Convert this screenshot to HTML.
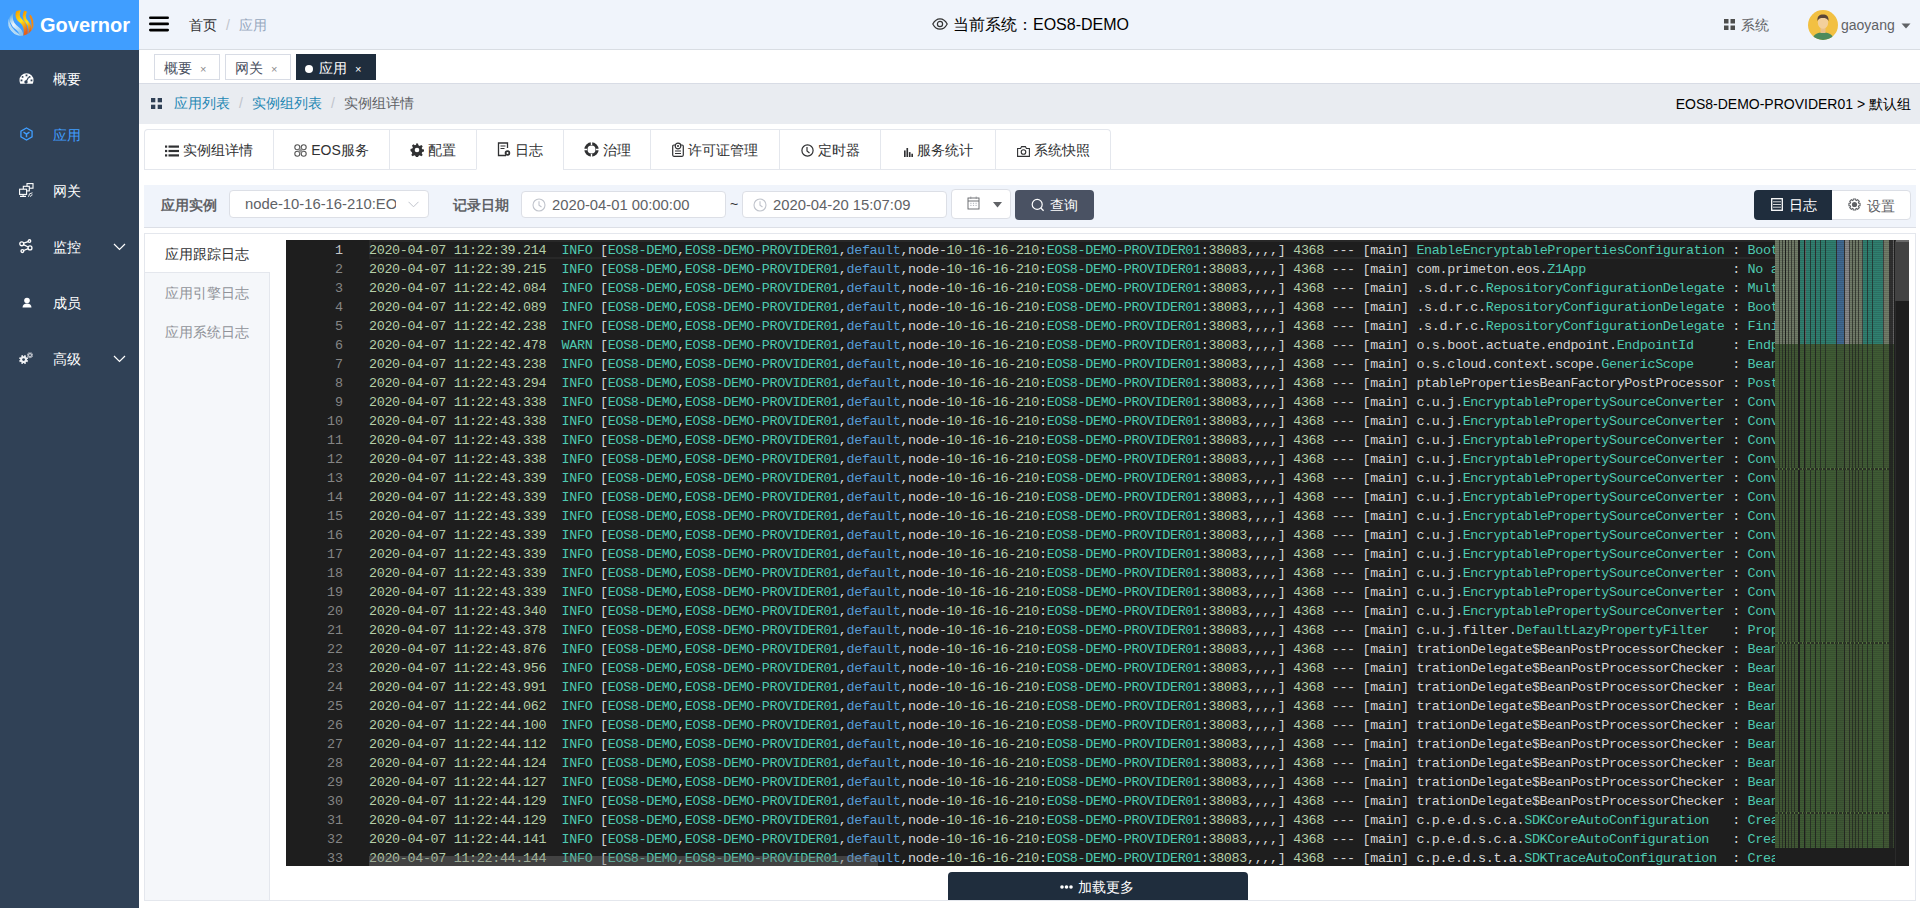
<!DOCTYPE html>
<html><head><meta charset="utf-8">
<style>
*{box-sizing:border-box;margin:0;padding:0}
html,body{width:1920px;height:908px;overflow:hidden;background:#fff;font-family:"Liberation Sans",sans-serif;font-size:14px;color:#303133}
.abs{position:absolute}
#side{left:0;top:0;width:139px;height:908px;background:#304156}
#logo{left:0;top:0;width:139px;height:50px;background:#409eff}
#logo .t{left:40px;top:12.5px;font-size:20px;font-weight:bold;color:#fff;line-height:24px}
.mi{left:0;width:139px;height:56px;color:#fff}
.mi .tx{position:absolute;left:53px;top:19px;line-height:18px;font-size:14px}
.mi svg{position:absolute;left:19px;top:21px}
.mi .arr{position:absolute;left:113px;top:24px}
#nav{left:139px;top:0;width:1781px;height:50px;background:#f0f4fb;border-bottom:1px solid #d9dde3}
#tags{left:139px;top:50px;width:1781px;height:34px;background:#fff;border-bottom:1px solid #d8dce5}
.tag{position:absolute;top:4px;height:26px;border:1px solid #d8dce5;background:#fff;color:#495060;font-size:14px;line-height:26px;padding-left:9px}
.tag .x{position:absolute;font-size:11px;color:#8c8c8c;line-height:24px}
#bc{left:139px;top:84px;width:1781px;height:40px;background:#e9ecf1}
#tabs{left:144px;top:129px;width:967px;height:41px;border:1px solid #e4e7ed;border-bottom:none;border-radius:4px 4px 0 0}
.tab{position:absolute;top:0;height:40px;border-left:1px solid #e4e7ed;border-bottom:1px solid #e4e7ed;line-height:40px;font-size:14px;color:#303133;text-align:center;white-space:nowrap}
.tab.first{border-left:none}
.tab.act{border-bottom-color:#fff}
.tab svg{vertical-align:-2px;margin-right:4px}
#tabline{left:1110px;top:169px;width:0px;height:1px;background:#e4e7ed}
#filter{left:144px;top:185px;width:1772px;height:43px;background:#f0f4fb;border-bottom:1px solid #dcdfe6}
.lbl{position:absolute;top:11px;font-weight:bold;font-size:14px;color:#606266;line-height:18px}
.inp{position:absolute;background:#fff;border:1px solid #dcdfe6;border-radius:4px;color:#606266;font-size:14px}
#panel{left:144px;top:233px;width:1772px;height:668px;border:1px solid #e4e7ed;background:#fff}
#ltabs{left:145px;top:234px;width:125px;height:666px;background:#f5f7fa;border-right:1px solid #e4e7ed}
.lt{position:absolute;left:0;width:124px;height:39px;line-height:41px;padding-left:20px;color:#909399;font-size:14px}
.lt.act{background:#fff;color:#303133;border-bottom:1px solid #e4e7ed;width:125px}
#ed{left:286px;top:240px;width:1623px;height:626px;background:#1e1e1e;overflow:hidden}
.ln{position:absolute;left:0;height:19px;margin-top:1px;width:1623px;line-height:19px;font-family:"Liberation Mono",monospace;font-size:13.4px;white-space:pre}
.ln i{font-style:normal}
.num{position:absolute;left:0;width:57px;text-align:right;color:#858585}
.num.act{color:#c6c6c6}
.txt{position:absolute;left:83px;letter-spacing:-0.335px}
#curline{left:369px;top:240px;width:1406px;height:19px;border:2px solid #282828;border-right:none}
#mm{left:1775px;top:240px;width:120px;height:608px}
#mmtop{left:1775px;top:240px;width:120px;height:104px}
#mmbot{left:1775px;top:344px;width:120px;height:504px}
#vs{left:1895px;top:240px;width:14px;height:626px;background:#1e1e1e;border-left:1px solid #2a2a2a}
#vsl{left:1895px;top:241px;width:14px;height:60px;background:#424242}
#hs{left:369px;top:856px;width:509px;height:10px;background:rgba(121,121,121,0.4)}
#more{left:948px;top:872px;width:300px;height:28px;background:#1f2d3d;border-radius:4px 4px 0 0;color:#fff;text-align:center;line-height:28px;font-size:14px}
</style></head><body>

<!-- Sidebar -->
<div id="side" class="abs"></div>
<div id="logo" class="abs">
  <svg class="abs" style="left:5px;top:7px" width="32" height="32" viewBox="0 0 32 32">
    <defs>
      <linearGradient id="ly" x1="0" y1="0" x2="0.3" y2="1"><stop offset="0" stop-color="#f59a00"/><stop offset="0.5" stop-color="#ffe418"/><stop offset="1" stop-color="#e5601a"/></linearGradient>
      <linearGradient id="lw" x1="0" y1="0" x2="0.3" y2="1"><stop offset="0" stop-color="#3a9ce0"/><stop offset="0.5" stop-color="#eef6fc"/><stop offset="1" stop-color="#8cc6ee"/></linearGradient>
      <filter id="lb"><feGaussianBlur stdDeviation="0.5"/></filter>
      <clipPath id="lc"><circle cx="16" cy="16" r="12.8"/></clipPath>
    </defs>
    <g filter="url(#lb)"><g clip-path="url(#lc)" fill="none" stroke-linecap="round">
      <path d="M2.5 12 C3 20 8 25 14 29" stroke="#b4daf4" stroke-width="3"/>
      <path d="M7 5 C4.5 12 7.5 18 12.5 21.5 C16 24 17 27 16 31" stroke="url(#lw)" stroke-width="3.6"/>
      <path d="M14.5 2 C11.5 7 12 11 16 14 C20 17 22 22 20 31" stroke="url(#ly)" stroke-width="4"/>
      <path d="M20.5 4.5 C18.5 8 19 12 22 15 C25 18 26 23 24 30" stroke="url(#ly)" stroke-width="3"/>
      <path d="M25.5 9 C27.5 13 28.5 18 27 25" stroke="#f08a18" stroke-width="2.2"/>
    </g></g>
  </svg>
  <div class="abs t">Governor</div>
</div>

<div class="abs mi" style="top:51px">
  <svg width="15" height="14" viewBox="0 0 15 14"><path d="M7.5 1.3A7 7 0 0 0 0.5 8.3c0 1.3.2 2.4.8 3.5h12.4c.6-1.1.8-2.2.8-3.5a7 7 0 0 0-7-7z" fill="#fff"/><rect x="6.6" y="2.5" width="1.8" height="1.8" fill="#304156"/><circle cx="3.6" cy="4.9" r="0.95" fill="#304156"/><circle cx="10.6" cy="4.9" r="0.95" fill="#304156"/><rect x="1.6" y="7.5" width="1.8" height="1.8" fill="#304156"/><rect x="11.6" y="7.5" width="1.8" height="1.8" fill="#304156"/><path d="M7.2 9.5 L9.6 5.3" stroke="#304156" stroke-width="1.2"/><circle cx="7" cy="10" r="1.7" fill="#304156"/></svg>
  <span class="tx">概要</span>
</div>
<div class="abs mi" style="top:107px;color:#409eff">
  <svg width="13" height="14" viewBox="0 0 14 15" style="left:19.5px;top:19.5px"><path d="M7 1 L13 4.4 V10.6 L7 14 L1 10.6 V4.4 Z" fill="none" stroke="#409eff" stroke-width="1.4"/><path d="M3.8 5.6 L7 7.6 L10.2 5.6 M7 7.6 V11" fill="none" stroke="#409eff" stroke-width="1.6"/></svg>
  <span class="tx">应用</span>
</div>
<div class="abs mi" style="top:163px">
  <svg width="15" height="14" viewBox="0 0 15 14" style="left:19px;top:20px"><rect x="8" y="0.6" width="6" height="4.6" fill="#304156" stroke="#fff" stroke-width="1.1"/><rect x="4.3" y="3.3" width="6" height="4.6" fill="#304156" stroke="#fff" stroke-width="1.1"/><rect x="0.6" y="6.2" width="7" height="5.2" fill="#304156" stroke="#fff" stroke-width="1.1"/><path d="M1 13.4h6M4.1 11.4v2" stroke="#fff" stroke-width="1.1"/><path d="M9.5 13.8a4 4 0 0 1 4-4M11.5 13.8a2 2 0 0 1 2-2" stroke="#fff" stroke-width="0.9" fill="none"/></svg>
  <span class="tx">网关</span>
</div>
<div class="abs mi" style="top:219px">
  <svg width="15" height="16" viewBox="0 0 15 16" style="top:19px"><g fill="none" stroke="#fff" stroke-width="1.3"><circle cx="2.75" cy="5.8" r="1.95"/><circle cx="10.45" cy="3.05" r="1.3"/><circle cx="11" cy="9.9" r="1.95"/><circle cx="3.4" cy="13.1" r="1.4"/><path d="M4.5 6.7 L9.2 9 M4.6 12.5 L9.2 10.7 M4.6 5.1 L9.1 3.6"/></g></svg>
  <span class="tx">监控</span>
  <svg class="arr" width="13" height="8" viewBox="0 0 13 8"><path d="M1 1 L6.5 6.5 L12 1" fill="none" stroke="#fff" stroke-width="1.2"/></svg>
</div>
<div class="abs mi" style="top:275px">
  <svg width="14" height="14" viewBox="0 0 14 14" style="left:20px"><circle cx="7" cy="4.5" r="2.8" fill="#fff"/><path d="M2.5 11.5c0-2.5 2-4 4.5-4s4.5 1.5 4.5 4z" fill="#fff"/></svg>
  <span class="tx">成员</span>
</div>
<div class="abs mi" style="top:331px">
  <svg width="15" height="14" viewBox="0 0 15 14" style="top:20px"><path d="M7.97 9.03 L9.11 9.50 L8.42 11.16 L7.29 10.68 L6.68 11.29 L7.16 12.42 L5.50 13.11 L5.03 11.97 L4.17 11.97 L3.70 13.11 L2.04 12.42 L2.52 11.29 L1.91 10.68 L0.78 11.16 L0.09 9.50 L1.23 9.03 L1.23 8.17 L0.09 7.70 L0.78 6.04 L1.91 6.52 L2.52 5.91 L2.04 4.78 L3.70 4.09 L4.17 5.23 L5.03 5.23 L5.50 4.09 L7.16 4.78 L6.68 5.91 L7.29 6.52 L8.42 6.04 L9.11 7.70 L7.97 8.17Z" fill="#eef0f3"/><circle cx="4.6" cy="8.6" r="1.4" fill="#304156"/><path d="M13.28 4.49 L14.04 4.80 L13.58 5.92 L12.82 5.61 L12.41 6.02 L12.72 6.78 L11.60 7.24 L11.29 6.48 L10.71 6.48 L10.40 7.24 L9.28 6.78 L9.59 6.02 L9.18 5.61 L8.42 5.92 L7.96 4.80 L8.72 4.49 L8.72 3.91 L7.96 3.60 L8.42 2.48 L9.18 2.79 L9.59 2.38 L9.28 1.62 L10.40 1.16 L10.71 1.92 L11.29 1.92 L11.60 1.16 L12.72 1.62 L12.41 2.38 L12.82 2.79 L13.58 2.48 L14.04 3.60 L13.28 3.91Z" fill="#b9bec7"/><circle cx="11" cy="4.2" r="0.9" fill="#304156"/></svg>
  <span class="tx">高级</span>
  <svg class="arr" width="13" height="8" viewBox="0 0 13 8"><path d="M1 1 L6.5 6.5 L12 1" fill="none" stroke="#fff" stroke-width="1.2"/></svg>
</div>

<!-- Navbar -->
<div id="nav" class="abs">
  <svg class="abs" style="left:10px;top:16px" width="20" height="16" viewBox="0 0 20 16"><rect x="0" y="0.5" width="20" height="2.6" rx="1.3" fill="#000"/><rect x="0" y="6.6" width="20" height="2.6" rx="1.3" fill="#000"/><rect x="0" y="12.8" width="20" height="2.6" rx="1.3" fill="#000"/></svg>
  <div class="abs" style="left:50px;top:16px;line-height:18px;font-size:14px;color:#303133">首页</div>
  <div class="abs" style="left:87px;top:16px;line-height:18px;font-size:14px;color:#c0c4cc">/</div>
  <div class="abs" style="left:100px;top:16px;line-height:18px;font-size:14px;color:#97a8be">应用</div>
  <svg class="abs" style="left:793px;top:18px" width="16" height="12" viewBox="0 0 16 12"><path d="M0.8 6 C3 1.8 5.5 0.8 8 0.8 C10.5 0.8 13 1.8 15.2 6 C13 10.2 10.5 11.2 8 11.2 C5.5 11.2 3 10.2 0.8 6 Z" fill="none" stroke="#333" stroke-width="1.2"/><circle cx="8" cy="6" r="2.6" fill="none" stroke="#333" stroke-width="1.2"/></svg>
  <div class="abs" style="left:814px;top:15px;line-height:20px;font-size:16px;color:#000">当前系统：EOS8-DEMO</div>
  <svg class="abs" style="left:1585px;top:19px" width="11" height="11" viewBox="0 0 11 11"><rect x="0" y="0" width="4.5" height="4.5" fill="#4d4d4d"/><rect x="6.5" y="0" width="4.5" height="4.5" fill="#4d4d4d"/><rect x="0" y="6.5" width="4.5" height="4.5" fill="#4d4d4d"/><rect x="6.5" y="6.5" width="4.5" height="4.5" fill="#4d4d4d"/></svg>
  <div class="abs" style="left:1602px;top:16px;line-height:18px;font-size:14px;color:#606266">系统</div>
  <svg class="abs" style="left:1669px;top:10px" width="30" height="30" viewBox="0 0 30 30">
    <clipPath id="avc"><circle cx="15" cy="15" r="15"/></clipPath>
    <g clip-path="url(#avc)">
      <rect width="30" height="30" fill="#f2c042"/>
      <path d="M4 30 C5 24 10 22.5 15 22.5 C20 22.5 25 24 26 30 Z" fill="#4d8a5c"/>
      <rect x="12.5" y="17" width="5" height="6" fill="#e8c08a"/>
      <ellipse cx="15" cy="12.5" rx="5.2" ry="6.2" fill="#f3d09c"/>
      <path d="M9.5 11 C9 6 11.5 4.5 15 4.5 C18.5 4.5 21 6 20.5 11 C19.5 8.5 17 8 15 8 C12.5 8 10.5 8.5 9.5 11 Z" fill="#5b4638"/>
    </g>
  </svg>
  <div class="abs" style="left:1702px;top:16px;line-height:18px;font-size:14px;color:#606266">gaoyang</div>
  <svg class="abs" style="left:1762px;top:23px" width="10" height="6" viewBox="0 0 10 6"><path d="M0.5 0.5 H9.5 L5 5.5 Z" fill="#606266"/></svg>
</div>

<!-- Tags view -->
<div id="tags" class="abs">
  <div class="tag" style="left:15px;width:66px">概要<span class="x" style="left:45px;top:2px">×</span></div>
  <div class="tag" style="left:86px;width:66px">网关<span class="x" style="left:45px;top:2px">×</span></div>
  <div class="tag" style="left:157px;width:80px;background:#1f2d3d;border-color:#1f2d3d;color:#fff;padding-left:22px"><span class="abs" style="left:8px;top:10px;width:8px;height:8px;border-radius:4px;background:#fff"></span>应用<span class="x" style="left:58px;top:2px;color:#fff">×</span></div>
</div>

<!-- Breadcrumb -->
<div id="bc" class="abs">
  <svg class="abs" style="left:12px;top:14px" width="11" height="11" viewBox="0 0 11 11"><rect x="0" y="0" width="4.3" height="4.3" fill="#304156"/><rect x="6.7" y="0" width="4.3" height="4.3" fill="#304156"/><rect x="0" y="6.7" width="4.3" height="4.3" fill="#304156"/><rect x="6.7" y="6.7" width="4.3" height="4.3" fill="#304156"/></svg>
  <div class="abs" style="left:35px;top:10px;line-height:18px;white-space:nowrap"><span style="color:#1e87b4">应用列表</span><span style="color:#c0c4cc;padding:0 9px">/</span><span style="color:#1e87b4">实例组列表</span><span style="color:#c0c4cc;padding:0 9px">/</span><span style="color:#606266">实例组详情</span></div>
  <div class="abs" style="right:9px;top:11px;line-height:18px;white-space:nowrap;color:#000">EOS8-DEMO-PROVIDER01 &gt; 默认组</div>
</div>

<!-- Tabs -->
<div id="tabs" class="abs">
  <div class="tab first" style="left:0;width:128px"><svg width="14" height="12" viewBox="0 0 14 12"><rect x="0" y="0.5" width="2.2" height="2.2" fill="#303133"/><rect x="3.5" y="0.5" width="10.5" height="2.2" fill="#303133"/><rect x="0" y="4.9" width="2.2" height="2.2" fill="#303133"/><rect x="3.5" y="4.9" width="10.5" height="2.2" fill="#303133"/><rect x="0" y="9.3" width="2.2" height="2.2" fill="#303133"/><rect x="3.5" y="9.3" width="10.5" height="2.2" fill="#303133"/></svg>实例组详情</div>
  <div class="tab" style="left:128px;width:116px"><svg width="13" height="13" viewBox="0 0 13 13"><g fill="none" stroke="#555" stroke-width="1.1"><circle cx="3.3" cy="3.3" r="2.5"/><circle cx="9.7" cy="3.3" r="2.5"/><circle cx="3.3" cy="9.7" r="2.5"/><circle cx="9.7" cy="9.7" r="2.5"/></g><rect x="4.5" y="4.5" width="4" height="4" fill="#999"/></svg>EOS服务</div>
  <div class="tab" style="left:244px;width:87px"><svg width="14" height="14" viewBox="0 0 14 14"><path d="M6 0.5h2l.4 1.8 1.3.6 1.6-1 1.4 1.4-1 1.6.6 1.3 1.8.4v2l-1.8.4-.6 1.3 1 1.6-1.4 1.4-1.6-1-1.3.6-.4 1.8H6l-.4-1.8-1.3-.6-1.6 1-1.4-1.4 1-1.6-.6-1.3L.5 8V6l1.8-.4.6-1.3-1-1.6 1.4-1.4 1.6 1 1.3-.6z" fill="#303133"/><circle cx="7" cy="7" r="2.3" fill="#fff"/></svg>配置</div>
  <div class="tab act" style="left:331px;width:87px"><svg width="14" height="15" viewBox="0 0 14 15"><path d="M9 13.5H1.5V1h9v5" fill="none" stroke="#303133" stroke-width="1.3"/><path d="M3.5 4h5M3.5 6.5h4" stroke="#303133" stroke-width="1.2"/><circle cx="10.5" cy="11" r="2.8" fill="#303133"/><circle cx="10.5" cy="11" r="1" fill="#fff"/></svg>日志</div>
  <div class="tab" style="left:418px;width:87px"><svg width="15" height="15" viewBox="0 0 15 15"><circle cx="7.5" cy="7.5" r="5.6" fill="none" stroke="#303133" stroke-width="3.2"/><path d="M7.5 0v3M7.5 12v3M0 7.5h3M12 7.5h3" stroke="#fff" stroke-width="1.4"/></svg>治理</div>
  <div class="tab" style="left:505px;width:129px"><svg width="12" height="15" viewBox="0 0 12 15"><rect x="0.7" y="3" width="10.6" height="11.3" rx="1.2" fill="none" stroke="#303133" stroke-width="1.2"/><circle cx="6" cy="4" r="2.8" fill="#fff" stroke="#303133" stroke-width="1.2"/><circle cx="6" cy="4" r="1" fill="#303133"/><path d="M3 9h6M3 11.5h6" stroke="#303133" stroke-width="1.1"/></svg>许可证管理</div>
  <div class="tab" style="left:634px;width:101px"><svg width="13" height="13" viewBox="0 0 13 13"><circle cx="6.5" cy="6.5" r="5.6" fill="none" stroke="#303133" stroke-width="1.2"/><path d="M6 3v4l2.5 2" fill="none" stroke="#303133" stroke-width="1.2"/></svg>定时器</div>
  <div class="tab" style="left:735px;width:115px"><svg width="9" height="9" viewBox="0 0 11 11"><rect x="0" y="3" width="2" height="8" fill="#303133"/><rect x="3" y="0" width="2" height="11" fill="#303133"/><rect x="6" y="5" width="2" height="6" fill="#303133"/><rect x="9" y="7" width="2" height="4" fill="#303133"/></svg>服务统计</div>
  <div class="tab" style="left:850px;width:115px"><svg width="13" height="11" viewBox="0 0 13 11"><path d="M0.6 2.5h3l1-1.9h3.8l1 1.9h3v7.9H0.6z" fill="none" stroke="#303133" stroke-width="1.1"/><circle cx="6.5" cy="6" r="2.3" fill="none" stroke="#303133" stroke-width="1.1"/></svg>系统快照</div>
</div>
<div class="abs" style="left:1110px;top:169px;width:806px;height:1px;background:#e4e7ed"></div>

<!-- Filter bar -->
<div id="filter" class="abs">
  <div class="lbl" style="left:17px">应用实例</div>
  <div class="inp" style="left:85px;top:5px;width:200px;height:28px">
    <div class="abs" style="left:15px;top:4px;line-height:18px;white-space:nowrap;overflow:hidden;width:151px;font-size:14.8px">node-10-16-16-210:EOS8-DEMO-PROVIDER01:38083</div>
    <svg class="abs" style="left:178px;top:10px" width="11" height="7" viewBox="0 0 11 7"><path d="M0.5 0.8 L5.5 5.8 L10.5 0.8" fill="none" stroke="#c0c4cc" stroke-width="1"/></svg>
  </div>
  <div class="lbl" style="left:309px">记录日期</div>
  <div class="inp" style="left:377px;top:6px;width:205px;height:27px">
    <svg class="abs" style="left:10px;top:6px" width="14" height="14" viewBox="0 0 14 14"><circle cx="7" cy="7" r="6" fill="none" stroke="#c0c4cc" stroke-width="1.1"/><path d="M7 3.2V7.2L9.5 9" fill="none" stroke="#c0c4cc" stroke-width="1.1"/></svg>
    <div class="abs" style="left:30px;top:4px;line-height:18px;font-size:14.8px">2020-04-01 00:00:00</div>
  </div>
  <div class="abs" style="left:586px;top:10px;line-height:18px;color:#303133">~</div>
  <div class="inp" style="left:598px;top:6px;width:205px;height:27px">
    <svg class="abs" style="left:10px;top:6px" width="14" height="14" viewBox="0 0 14 14"><circle cx="7" cy="7" r="6" fill="none" stroke="#c0c4cc" stroke-width="1.1"/><path d="M7 3.2V7.2L9.5 9" fill="none" stroke="#c0c4cc" stroke-width="1.1"/></svg>
    <div class="abs" style="left:30px;top:4px;line-height:18px;font-size:14.8px">2020-04-20 15:07:09</div>
  </div>
  <div class="inp" style="left:807px;top:4px;width:60px;height:30px">
    <svg class="abs" style="left:15px;top:6px" width="13" height="14" viewBox="0 0 13 14"><rect x="1" y="2" width="11" height="11" fill="none" stroke="#606266" stroke-width="0.9"/><path d="M1 5h11" stroke="#606266" stroke-width="0.9"/><path d="M3.8 0.6v2.4M9.2 0.6v2.4" stroke="#8d8f94" stroke-width="0.9"/><path d="M3.3 7.3h1.2M5.9 7.3h1.2M8.5 7.3h1.2M3.3 9.4h1.2M5.9 9.4h1.2M8.5 9.4h1.2" stroke="#9aa0a8" stroke-width="0.8"/></svg>
    <svg class="abs" style="left:41px;top:12px" width="9" height="6" viewBox="0 0 9 6"><path d="M0 0 H9 L4.5 5.5 Z" fill="#606266"/></svg>
  </div>
  <div class="abs" style="left:871px;top:5px;width:79px;height:30px;background:#4a5263;border-radius:4px;color:#fff">
    <svg class="abs" style="left:16px;top:8px" width="14" height="14" viewBox="0 0 14 14"><circle cx="6.2" cy="6.4" r="5" fill="none" stroke="#fff" stroke-width="1.2"/><path d="M9.8 10 L12.6 12.8" stroke="#fff" stroke-width="1.3"/></svg>
    <div class="abs" style="left:35px;top:6px;line-height:18px">查询</div>
  </div>
  <div class="abs" style="left:1610px;top:5px;width:157px;height:30px;border:1px solid #dcdfe6;border-radius:4px;background:#fff">
    <div class="abs" style="left:-1px;top:-1px;width:78px;height:30px;background:#1f2d3d;border-radius:4px 0 0 4px;color:#fff">
      <svg class="abs" style="left:17px;top:8px" width="12" height="13" viewBox="0 0 12 13"><rect x="0.7" y="0.7" width="10.6" height="11.6" fill="none" stroke="#fff" stroke-width="1.3"/><path d="M2 3.8h8M2 6.5h8M2 9.2h8" stroke="#e6e6e6" stroke-width="0.9"/></svg>
      <div class="abs" style="left:35px;top:6px;line-height:18px">日志</div>
    </div>
    <svg class="abs" style="left:93px;top:7px" width="13" height="13" viewBox="0 0 13 13"><path d="M10.70 5.19 L12.07 5.28 L12.07 7.72 L10.70 7.81 L10.40 8.54 L11.30 9.57 L9.57 11.30 L8.54 10.40 L7.81 10.70 L7.72 12.07 L5.28 12.07 L5.19 10.70 L4.46 10.40 L3.43 11.30 L1.70 9.57 L2.60 8.54 L2.30 7.81 L0.93 7.72 L0.93 5.28 L2.30 5.19 L2.60 4.46 L1.70 3.43 L3.43 1.70 L4.46 2.60 L5.19 2.30 L5.28 0.93 L7.72 0.93 L7.81 2.30 L8.54 2.60 L9.57 1.70 L11.30 3.43 L10.40 4.46Z" fill="none" stroke="#606266" stroke-width="1.1" stroke-linejoin="round"/><circle cx="6.5" cy="6.5" r="2.6" fill="#606266"/></svg>
    <div class="abs" style="left:112px;top:6px;line-height:18px;color:#606266">设置</div>
  </div>
</div>

<!-- Panel -->
<div id="panel" class="abs"></div>
<div id="ltabs" class="abs">
  <div class="lt act" style="top:0">应用跟踪日志</div>
  <div class="lt" style="top:39px">应用引擎日志</div>
  <div class="lt" style="top:78px">应用系统日志</div>
</div>

<!-- Editor -->
<div id="ed" class="abs">
<div class="abs" style="left:83px;top:0;width:1406px;height:19px;border:2px solid #282828;border-right:none"></div>
<div class="ln" style="top:0px"><span class="num act">1</span><span class="txt"><i style="color:#b5cea8">2020-04-07 11:22:39.214</i><i style="color:#d4d4d4">  </i><i style="color:#4ec9b0">INFO</i><i style="color:#d4d4d4"> [</i><i style="color:#4ec9b0">EOS8-DEMO</i><i style="color:#d4d4d4">,</i><i style="color:#4ec9b0">EOS8-DEMO-PROVIDER01</i><i style="color:#d4d4d4">,</i><i style="color:#569cd6">default</i><i style="color:#d4d4d4">,node-</i><i style="color:#b5cea8">10-16-16-210</i><i style="color:#d4d4d4">:</i><i style="color:#4ec9b0">EOS8-DEMO-PROVIDER01</i><i style="color:#d4d4d4">:</i><i style="color:#b5cea8">38083</i><i style="color:#d4d4d4">,,,,] </i><i style="color:#b5cea8">4368</i><i style="color:#d4d4d4"> --- [main] </i><i style="color:#4ec9b0">EnableEncryptablePropertiesConfiguration</i><i style="color:#d4d4d4"> : </i><i style="color:#4ec9b0">Boottstrapping Spring Data repositories in DEFAULT mode.</i></span></div>
<div class="ln" style="top:19px"><span class="num">2</span><span class="txt"><i style="color:#b5cea8">2020-04-07 11:22:39.215</i><i style="color:#d4d4d4">  </i><i style="color:#4ec9b0">INFO</i><i style="color:#d4d4d4"> [</i><i style="color:#4ec9b0">EOS8-DEMO</i><i style="color:#d4d4d4">,</i><i style="color:#4ec9b0">EOS8-DEMO-PROVIDER01</i><i style="color:#d4d4d4">,</i><i style="color:#569cd6">default</i><i style="color:#d4d4d4">,node-</i><i style="color:#b5cea8">10-16-16-210</i><i style="color:#d4d4d4">:</i><i style="color:#4ec9b0">EOS8-DEMO-PROVIDER01</i><i style="color:#d4d4d4">:</i><i style="color:#b5cea8">38083</i><i style="color:#d4d4d4">,,,,] </i><i style="color:#b5cea8">4368</i><i style="color:#d4d4d4"> --- [main] com.primeton.eos.</i><i style="color:#4ec9b0">Z1App</i><i style="color:#d4d4d4">                   : </i><i style="color:#4ec9b0">No atstrapping Spring Data repositories in DEFAULT mode.</i></span></div>
<div class="ln" style="top:38px"><span class="num">3</span><span class="txt"><i style="color:#b5cea8">2020-04-07 11:22:42.084</i><i style="color:#d4d4d4">  </i><i style="color:#4ec9b0">INFO</i><i style="color:#d4d4d4"> [</i><i style="color:#4ec9b0">EOS8-DEMO</i><i style="color:#d4d4d4">,</i><i style="color:#4ec9b0">EOS8-DEMO-PROVIDER01</i><i style="color:#d4d4d4">,</i><i style="color:#569cd6">default</i><i style="color:#d4d4d4">,node-</i><i style="color:#b5cea8">10-16-16-210</i><i style="color:#d4d4d4">:</i><i style="color:#4ec9b0">EOS8-DEMO-PROVIDER01</i><i style="color:#d4d4d4">:</i><i style="color:#b5cea8">38083</i><i style="color:#d4d4d4">,,,,] </i><i style="color:#b5cea8">4368</i><i style="color:#d4d4d4"> --- [main] .s.d.r.c.</i><i style="color:#4ec9b0">RepositoryConfigurationDelegate</i><i style="color:#d4d4d4"> : </i><i style="color:#4ec9b0">Multtstrapping Spring Data repositories in DEFAULT mode.</i></span></div>
<div class="ln" style="top:57px"><span class="num">4</span><span class="txt"><i style="color:#b5cea8">2020-04-07 11:22:42.089</i><i style="color:#d4d4d4">  </i><i style="color:#4ec9b0">INFO</i><i style="color:#d4d4d4"> [</i><i style="color:#4ec9b0">EOS8-DEMO</i><i style="color:#d4d4d4">,</i><i style="color:#4ec9b0">EOS8-DEMO-PROVIDER01</i><i style="color:#d4d4d4">,</i><i style="color:#569cd6">default</i><i style="color:#d4d4d4">,node-</i><i style="color:#b5cea8">10-16-16-210</i><i style="color:#d4d4d4">:</i><i style="color:#4ec9b0">EOS8-DEMO-PROVIDER01</i><i style="color:#d4d4d4">:</i><i style="color:#b5cea8">38083</i><i style="color:#d4d4d4">,,,,] </i><i style="color:#b5cea8">4368</i><i style="color:#d4d4d4"> --- [main] .s.d.r.c.</i><i style="color:#4ec9b0">RepositoryConfigurationDelegate</i><i style="color:#d4d4d4"> : </i><i style="color:#4ec9b0">Boottstrapping Spring Data repositories in DEFAULT mode.</i></span></div>
<div class="ln" style="top:76px"><span class="num">5</span><span class="txt"><i style="color:#b5cea8">2020-04-07 11:22:42.238</i><i style="color:#d4d4d4">  </i><i style="color:#4ec9b0">INFO</i><i style="color:#d4d4d4"> [</i><i style="color:#4ec9b0">EOS8-DEMO</i><i style="color:#d4d4d4">,</i><i style="color:#4ec9b0">EOS8-DEMO-PROVIDER01</i><i style="color:#d4d4d4">,</i><i style="color:#569cd6">default</i><i style="color:#d4d4d4">,node-</i><i style="color:#b5cea8">10-16-16-210</i><i style="color:#d4d4d4">:</i><i style="color:#4ec9b0">EOS8-DEMO-PROVIDER01</i><i style="color:#d4d4d4">:</i><i style="color:#b5cea8">38083</i><i style="color:#d4d4d4">,,,,] </i><i style="color:#b5cea8">4368</i><i style="color:#d4d4d4"> --- [main] .s.d.r.c.</i><i style="color:#4ec9b0">RepositoryConfigurationDelegate</i><i style="color:#d4d4d4"> : </i><i style="color:#4ec9b0">Finitstrapping Spring Data repositories in DEFAULT mode.</i></span></div>
<div class="ln" style="top:95px"><span class="num">6</span><span class="txt"><i style="color:#b5cea8">2020-04-07 11:22:42.478</i><i style="color:#d4d4d4">  </i><i style="color:#4ec9b0">WARN</i><i style="color:#d4d4d4"> [</i><i style="color:#4ec9b0">EOS8-DEMO</i><i style="color:#d4d4d4">,</i><i style="color:#4ec9b0">EOS8-DEMO-PROVIDER01</i><i style="color:#d4d4d4">,</i><i style="color:#569cd6">default</i><i style="color:#d4d4d4">,node-</i><i style="color:#b5cea8">10-16-16-210</i><i style="color:#d4d4d4">:</i><i style="color:#4ec9b0">EOS8-DEMO-PROVIDER01</i><i style="color:#d4d4d4">:</i><i style="color:#b5cea8">38083</i><i style="color:#d4d4d4">,,,,] </i><i style="color:#b5cea8">4368</i><i style="color:#d4d4d4"> --- [main] o.s.boot.actuate.endpoint.</i><i style="color:#4ec9b0">EndpointId</i><i style="color:#d4d4d4">     : </i><i style="color:#4ec9b0">Endptstrapping Spring Data repositories in DEFAULT mode.</i></span></div>
<div class="ln" style="top:114px"><span class="num">7</span><span class="txt"><i style="color:#b5cea8">2020-04-07 11:22:43.238</i><i style="color:#d4d4d4">  </i><i style="color:#4ec9b0">INFO</i><i style="color:#d4d4d4"> [</i><i style="color:#4ec9b0">EOS8-DEMO</i><i style="color:#d4d4d4">,</i><i style="color:#4ec9b0">EOS8-DEMO-PROVIDER01</i><i style="color:#d4d4d4">,</i><i style="color:#569cd6">default</i><i style="color:#d4d4d4">,node-</i><i style="color:#b5cea8">10-16-16-210</i><i style="color:#d4d4d4">:</i><i style="color:#4ec9b0">EOS8-DEMO-PROVIDER01</i><i style="color:#d4d4d4">:</i><i style="color:#b5cea8">38083</i><i style="color:#d4d4d4">,,,,] </i><i style="color:#b5cea8">4368</i><i style="color:#d4d4d4"> --- [main] o.s.cloud.context.scope.</i><i style="color:#4ec9b0">GenericScope</i><i style="color:#d4d4d4">     : </i><i style="color:#4ec9b0">Beantstrapping Spring Data repositories in DEFAULT mode.</i></span></div>
<div class="ln" style="top:133px"><span class="num">8</span><span class="txt"><i style="color:#b5cea8">2020-04-07 11:22:43.294</i><i style="color:#d4d4d4">  </i><i style="color:#4ec9b0">INFO</i><i style="color:#d4d4d4"> [</i><i style="color:#4ec9b0">EOS8-DEMO</i><i style="color:#d4d4d4">,</i><i style="color:#4ec9b0">EOS8-DEMO-PROVIDER01</i><i style="color:#d4d4d4">,</i><i style="color:#569cd6">default</i><i style="color:#d4d4d4">,node-</i><i style="color:#b5cea8">10-16-16-210</i><i style="color:#d4d4d4">:</i><i style="color:#4ec9b0">EOS8-DEMO-PROVIDER01</i><i style="color:#d4d4d4">:</i><i style="color:#b5cea8">38083</i><i style="color:#d4d4d4">,,,,] </i><i style="color:#b5cea8">4368</i><i style="color:#d4d4d4"> --- [main] ptablePropertiesBeanFactoryPostProcessor</i><i style="color:#4ec9b0"></i><i style="color:#d4d4d4"> : </i><i style="color:#4ec9b0">Posttstrapping Spring Data repositories in DEFAULT mode.</i></span></div>
<div class="ln" style="top:152px"><span class="num">9</span><span class="txt"><i style="color:#b5cea8">2020-04-07 11:22:43.338</i><i style="color:#d4d4d4">  </i><i style="color:#4ec9b0">INFO</i><i style="color:#d4d4d4"> [</i><i style="color:#4ec9b0">EOS8-DEMO</i><i style="color:#d4d4d4">,</i><i style="color:#4ec9b0">EOS8-DEMO-PROVIDER01</i><i style="color:#d4d4d4">,</i><i style="color:#569cd6">default</i><i style="color:#d4d4d4">,node-</i><i style="color:#b5cea8">10-16-16-210</i><i style="color:#d4d4d4">:</i><i style="color:#4ec9b0">EOS8-DEMO-PROVIDER01</i><i style="color:#d4d4d4">:</i><i style="color:#b5cea8">38083</i><i style="color:#d4d4d4">,,,,] </i><i style="color:#b5cea8">4368</i><i style="color:#d4d4d4"> --- [main] c.u.j.</i><i style="color:#4ec9b0">EncryptablePropertySourceConverter</i><i style="color:#d4d4d4"> : </i><i style="color:#4ec9b0">Convtstrapping Spring Data repositories in DEFAULT mode.</i></span></div>
<div class="ln" style="top:171px"><span class="num">10</span><span class="txt"><i style="color:#b5cea8">2020-04-07 11:22:43.338</i><i style="color:#d4d4d4">  </i><i style="color:#4ec9b0">INFO</i><i style="color:#d4d4d4"> [</i><i style="color:#4ec9b0">EOS8-DEMO</i><i style="color:#d4d4d4">,</i><i style="color:#4ec9b0">EOS8-DEMO-PROVIDER01</i><i style="color:#d4d4d4">,</i><i style="color:#569cd6">default</i><i style="color:#d4d4d4">,node-</i><i style="color:#b5cea8">10-16-16-210</i><i style="color:#d4d4d4">:</i><i style="color:#4ec9b0">EOS8-DEMO-PROVIDER01</i><i style="color:#d4d4d4">:</i><i style="color:#b5cea8">38083</i><i style="color:#d4d4d4">,,,,] </i><i style="color:#b5cea8">4368</i><i style="color:#d4d4d4"> --- [main] c.u.j.</i><i style="color:#4ec9b0">EncryptablePropertySourceConverter</i><i style="color:#d4d4d4"> : </i><i style="color:#4ec9b0">Convtstrapping Spring Data repositories in DEFAULT mode.</i></span></div>
<div class="ln" style="top:190px"><span class="num">11</span><span class="txt"><i style="color:#b5cea8">2020-04-07 11:22:43.338</i><i style="color:#d4d4d4">  </i><i style="color:#4ec9b0">INFO</i><i style="color:#d4d4d4"> [</i><i style="color:#4ec9b0">EOS8-DEMO</i><i style="color:#d4d4d4">,</i><i style="color:#4ec9b0">EOS8-DEMO-PROVIDER01</i><i style="color:#d4d4d4">,</i><i style="color:#569cd6">default</i><i style="color:#d4d4d4">,node-</i><i style="color:#b5cea8">10-16-16-210</i><i style="color:#d4d4d4">:</i><i style="color:#4ec9b0">EOS8-DEMO-PROVIDER01</i><i style="color:#d4d4d4">:</i><i style="color:#b5cea8">38083</i><i style="color:#d4d4d4">,,,,] </i><i style="color:#b5cea8">4368</i><i style="color:#d4d4d4"> --- [main] c.u.j.</i><i style="color:#4ec9b0">EncryptablePropertySourceConverter</i><i style="color:#d4d4d4"> : </i><i style="color:#4ec9b0">Convtstrapping Spring Data repositories in DEFAULT mode.</i></span></div>
<div class="ln" style="top:209px"><span class="num">12</span><span class="txt"><i style="color:#b5cea8">2020-04-07 11:22:43.338</i><i style="color:#d4d4d4">  </i><i style="color:#4ec9b0">INFO</i><i style="color:#d4d4d4"> [</i><i style="color:#4ec9b0">EOS8-DEMO</i><i style="color:#d4d4d4">,</i><i style="color:#4ec9b0">EOS8-DEMO-PROVIDER01</i><i style="color:#d4d4d4">,</i><i style="color:#569cd6">default</i><i style="color:#d4d4d4">,node-</i><i style="color:#b5cea8">10-16-16-210</i><i style="color:#d4d4d4">:</i><i style="color:#4ec9b0">EOS8-DEMO-PROVIDER01</i><i style="color:#d4d4d4">:</i><i style="color:#b5cea8">38083</i><i style="color:#d4d4d4">,,,,] </i><i style="color:#b5cea8">4368</i><i style="color:#d4d4d4"> --- [main] c.u.j.</i><i style="color:#4ec9b0">EncryptablePropertySourceConverter</i><i style="color:#d4d4d4"> : </i><i style="color:#4ec9b0">Convtstrapping Spring Data repositories in DEFAULT mode.</i></span></div>
<div class="ln" style="top:228px"><span class="num">13</span><span class="txt"><i style="color:#b5cea8">2020-04-07 11:22:43.339</i><i style="color:#d4d4d4">  </i><i style="color:#4ec9b0">INFO</i><i style="color:#d4d4d4"> [</i><i style="color:#4ec9b0">EOS8-DEMO</i><i style="color:#d4d4d4">,</i><i style="color:#4ec9b0">EOS8-DEMO-PROVIDER01</i><i style="color:#d4d4d4">,</i><i style="color:#569cd6">default</i><i style="color:#d4d4d4">,node-</i><i style="color:#b5cea8">10-16-16-210</i><i style="color:#d4d4d4">:</i><i style="color:#4ec9b0">EOS8-DEMO-PROVIDER01</i><i style="color:#d4d4d4">:</i><i style="color:#b5cea8">38083</i><i style="color:#d4d4d4">,,,,] </i><i style="color:#b5cea8">4368</i><i style="color:#d4d4d4"> --- [main] c.u.j.</i><i style="color:#4ec9b0">EncryptablePropertySourceConverter</i><i style="color:#d4d4d4"> : </i><i style="color:#4ec9b0">Convtstrapping Spring Data repositories in DEFAULT mode.</i></span></div>
<div class="ln" style="top:247px"><span class="num">14</span><span class="txt"><i style="color:#b5cea8">2020-04-07 11:22:43.339</i><i style="color:#d4d4d4">  </i><i style="color:#4ec9b0">INFO</i><i style="color:#d4d4d4"> [</i><i style="color:#4ec9b0">EOS8-DEMO</i><i style="color:#d4d4d4">,</i><i style="color:#4ec9b0">EOS8-DEMO-PROVIDER01</i><i style="color:#d4d4d4">,</i><i style="color:#569cd6">default</i><i style="color:#d4d4d4">,node-</i><i style="color:#b5cea8">10-16-16-210</i><i style="color:#d4d4d4">:</i><i style="color:#4ec9b0">EOS8-DEMO-PROVIDER01</i><i style="color:#d4d4d4">:</i><i style="color:#b5cea8">38083</i><i style="color:#d4d4d4">,,,,] </i><i style="color:#b5cea8">4368</i><i style="color:#d4d4d4"> --- [main] c.u.j.</i><i style="color:#4ec9b0">EncryptablePropertySourceConverter</i><i style="color:#d4d4d4"> : </i><i style="color:#4ec9b0">Convtstrapping Spring Data repositories in DEFAULT mode.</i></span></div>
<div class="ln" style="top:266px"><span class="num">15</span><span class="txt"><i style="color:#b5cea8">2020-04-07 11:22:43.339</i><i style="color:#d4d4d4">  </i><i style="color:#4ec9b0">INFO</i><i style="color:#d4d4d4"> [</i><i style="color:#4ec9b0">EOS8-DEMO</i><i style="color:#d4d4d4">,</i><i style="color:#4ec9b0">EOS8-DEMO-PROVIDER01</i><i style="color:#d4d4d4">,</i><i style="color:#569cd6">default</i><i style="color:#d4d4d4">,node-</i><i style="color:#b5cea8">10-16-16-210</i><i style="color:#d4d4d4">:</i><i style="color:#4ec9b0">EOS8-DEMO-PROVIDER01</i><i style="color:#d4d4d4">:</i><i style="color:#b5cea8">38083</i><i style="color:#d4d4d4">,,,,] </i><i style="color:#b5cea8">4368</i><i style="color:#d4d4d4"> --- [main] c.u.j.</i><i style="color:#4ec9b0">EncryptablePropertySourceConverter</i><i style="color:#d4d4d4"> : </i><i style="color:#4ec9b0">Convtstrapping Spring Data repositories in DEFAULT mode.</i></span></div>
<div class="ln" style="top:285px"><span class="num">16</span><span class="txt"><i style="color:#b5cea8">2020-04-07 11:22:43.339</i><i style="color:#d4d4d4">  </i><i style="color:#4ec9b0">INFO</i><i style="color:#d4d4d4"> [</i><i style="color:#4ec9b0">EOS8-DEMO</i><i style="color:#d4d4d4">,</i><i style="color:#4ec9b0">EOS8-DEMO-PROVIDER01</i><i style="color:#d4d4d4">,</i><i style="color:#569cd6">default</i><i style="color:#d4d4d4">,node-</i><i style="color:#b5cea8">10-16-16-210</i><i style="color:#d4d4d4">:</i><i style="color:#4ec9b0">EOS8-DEMO-PROVIDER01</i><i style="color:#d4d4d4">:</i><i style="color:#b5cea8">38083</i><i style="color:#d4d4d4">,,,,] </i><i style="color:#b5cea8">4368</i><i style="color:#d4d4d4"> --- [main] c.u.j.</i><i style="color:#4ec9b0">EncryptablePropertySourceConverter</i><i style="color:#d4d4d4"> : </i><i style="color:#4ec9b0">Convtstrapping Spring Data repositories in DEFAULT mode.</i></span></div>
<div class="ln" style="top:304px"><span class="num">17</span><span class="txt"><i style="color:#b5cea8">2020-04-07 11:22:43.339</i><i style="color:#d4d4d4">  </i><i style="color:#4ec9b0">INFO</i><i style="color:#d4d4d4"> [</i><i style="color:#4ec9b0">EOS8-DEMO</i><i style="color:#d4d4d4">,</i><i style="color:#4ec9b0">EOS8-DEMO-PROVIDER01</i><i style="color:#d4d4d4">,</i><i style="color:#569cd6">default</i><i style="color:#d4d4d4">,node-</i><i style="color:#b5cea8">10-16-16-210</i><i style="color:#d4d4d4">:</i><i style="color:#4ec9b0">EOS8-DEMO-PROVIDER01</i><i style="color:#d4d4d4">:</i><i style="color:#b5cea8">38083</i><i style="color:#d4d4d4">,,,,] </i><i style="color:#b5cea8">4368</i><i style="color:#d4d4d4"> --- [main] c.u.j.</i><i style="color:#4ec9b0">EncryptablePropertySourceConverter</i><i style="color:#d4d4d4"> : </i><i style="color:#4ec9b0">Convtstrapping Spring Data repositories in DEFAULT mode.</i></span></div>
<div class="ln" style="top:323px"><span class="num">18</span><span class="txt"><i style="color:#b5cea8">2020-04-07 11:22:43.339</i><i style="color:#d4d4d4">  </i><i style="color:#4ec9b0">INFO</i><i style="color:#d4d4d4"> [</i><i style="color:#4ec9b0">EOS8-DEMO</i><i style="color:#d4d4d4">,</i><i style="color:#4ec9b0">EOS8-DEMO-PROVIDER01</i><i style="color:#d4d4d4">,</i><i style="color:#569cd6">default</i><i style="color:#d4d4d4">,node-</i><i style="color:#b5cea8">10-16-16-210</i><i style="color:#d4d4d4">:</i><i style="color:#4ec9b0">EOS8-DEMO-PROVIDER01</i><i style="color:#d4d4d4">:</i><i style="color:#b5cea8">38083</i><i style="color:#d4d4d4">,,,,] </i><i style="color:#b5cea8">4368</i><i style="color:#d4d4d4"> --- [main] c.u.j.</i><i style="color:#4ec9b0">EncryptablePropertySourceConverter</i><i style="color:#d4d4d4"> : </i><i style="color:#4ec9b0">Convtstrapping Spring Data repositories in DEFAULT mode.</i></span></div>
<div class="ln" style="top:342px"><span class="num">19</span><span class="txt"><i style="color:#b5cea8">2020-04-07 11:22:43.339</i><i style="color:#d4d4d4">  </i><i style="color:#4ec9b0">INFO</i><i style="color:#d4d4d4"> [</i><i style="color:#4ec9b0">EOS8-DEMO</i><i style="color:#d4d4d4">,</i><i style="color:#4ec9b0">EOS8-DEMO-PROVIDER01</i><i style="color:#d4d4d4">,</i><i style="color:#569cd6">default</i><i style="color:#d4d4d4">,node-</i><i style="color:#b5cea8">10-16-16-210</i><i style="color:#d4d4d4">:</i><i style="color:#4ec9b0">EOS8-DEMO-PROVIDER01</i><i style="color:#d4d4d4">:</i><i style="color:#b5cea8">38083</i><i style="color:#d4d4d4">,,,,] </i><i style="color:#b5cea8">4368</i><i style="color:#d4d4d4"> --- [main] c.u.j.</i><i style="color:#4ec9b0">EncryptablePropertySourceConverter</i><i style="color:#d4d4d4"> : </i><i style="color:#4ec9b0">Convtstrapping Spring Data repositories in DEFAULT mode.</i></span></div>
<div class="ln" style="top:361px"><span class="num">20</span><span class="txt"><i style="color:#b5cea8">2020-04-07 11:22:43.340</i><i style="color:#d4d4d4">  </i><i style="color:#4ec9b0">INFO</i><i style="color:#d4d4d4"> [</i><i style="color:#4ec9b0">EOS8-DEMO</i><i style="color:#d4d4d4">,</i><i style="color:#4ec9b0">EOS8-DEMO-PROVIDER01</i><i style="color:#d4d4d4">,</i><i style="color:#569cd6">default</i><i style="color:#d4d4d4">,node-</i><i style="color:#b5cea8">10-16-16-210</i><i style="color:#d4d4d4">:</i><i style="color:#4ec9b0">EOS8-DEMO-PROVIDER01</i><i style="color:#d4d4d4">:</i><i style="color:#b5cea8">38083</i><i style="color:#d4d4d4">,,,,] </i><i style="color:#b5cea8">4368</i><i style="color:#d4d4d4"> --- [main] c.u.j.</i><i style="color:#4ec9b0">EncryptablePropertySourceConverter</i><i style="color:#d4d4d4"> : </i><i style="color:#4ec9b0">Convtstrapping Spring Data repositories in DEFAULT mode.</i></span></div>
<div class="ln" style="top:380px"><span class="num">21</span><span class="txt"><i style="color:#b5cea8">2020-04-07 11:22:43.378</i><i style="color:#d4d4d4">  </i><i style="color:#4ec9b0">INFO</i><i style="color:#d4d4d4"> [</i><i style="color:#4ec9b0">EOS8-DEMO</i><i style="color:#d4d4d4">,</i><i style="color:#4ec9b0">EOS8-DEMO-PROVIDER01</i><i style="color:#d4d4d4">,</i><i style="color:#569cd6">default</i><i style="color:#d4d4d4">,node-</i><i style="color:#b5cea8">10-16-16-210</i><i style="color:#d4d4d4">:</i><i style="color:#4ec9b0">EOS8-DEMO-PROVIDER01</i><i style="color:#d4d4d4">:</i><i style="color:#b5cea8">38083</i><i style="color:#d4d4d4">,,,,] </i><i style="color:#b5cea8">4368</i><i style="color:#d4d4d4"> --- [main] c.u.j.filter.</i><i style="color:#4ec9b0">DefaultLazyPropertyFilter</i><i style="color:#d4d4d4">   : </i><i style="color:#4ec9b0">Proptstrapping Spring Data repositories in DEFAULT mode.</i></span></div>
<div class="ln" style="top:399px"><span class="num">22</span><span class="txt"><i style="color:#b5cea8">2020-04-07 11:22:43.876</i><i style="color:#d4d4d4">  </i><i style="color:#4ec9b0">INFO</i><i style="color:#d4d4d4"> [</i><i style="color:#4ec9b0">EOS8-DEMO</i><i style="color:#d4d4d4">,</i><i style="color:#4ec9b0">EOS8-DEMO-PROVIDER01</i><i style="color:#d4d4d4">,</i><i style="color:#569cd6">default</i><i style="color:#d4d4d4">,node-</i><i style="color:#b5cea8">10-16-16-210</i><i style="color:#d4d4d4">:</i><i style="color:#4ec9b0">EOS8-DEMO-PROVIDER01</i><i style="color:#d4d4d4">:</i><i style="color:#b5cea8">38083</i><i style="color:#d4d4d4">,,,,] </i><i style="color:#b5cea8">4368</i><i style="color:#d4d4d4"> --- [main] trationDelegate$BeanPostProcessorChecker</i><i style="color:#4ec9b0"></i><i style="color:#d4d4d4"> : </i><i style="color:#4ec9b0">Beantstrapping Spring Data repositories in DEFAULT mode.</i></span></div>
<div class="ln" style="top:418px"><span class="num">23</span><span class="txt"><i style="color:#b5cea8">2020-04-07 11:22:43.956</i><i style="color:#d4d4d4">  </i><i style="color:#4ec9b0">INFO</i><i style="color:#d4d4d4"> [</i><i style="color:#4ec9b0">EOS8-DEMO</i><i style="color:#d4d4d4">,</i><i style="color:#4ec9b0">EOS8-DEMO-PROVIDER01</i><i style="color:#d4d4d4">,</i><i style="color:#569cd6">default</i><i style="color:#d4d4d4">,node-</i><i style="color:#b5cea8">10-16-16-210</i><i style="color:#d4d4d4">:</i><i style="color:#4ec9b0">EOS8-DEMO-PROVIDER01</i><i style="color:#d4d4d4">:</i><i style="color:#b5cea8">38083</i><i style="color:#d4d4d4">,,,,] </i><i style="color:#b5cea8">4368</i><i style="color:#d4d4d4"> --- [main] trationDelegate$BeanPostProcessorChecker</i><i style="color:#4ec9b0"></i><i style="color:#d4d4d4"> : </i><i style="color:#4ec9b0">Beantstrapping Spring Data repositories in DEFAULT mode.</i></span></div>
<div class="ln" style="top:437px"><span class="num">24</span><span class="txt"><i style="color:#b5cea8">2020-04-07 11:22:43.991</i><i style="color:#d4d4d4">  </i><i style="color:#4ec9b0">INFO</i><i style="color:#d4d4d4"> [</i><i style="color:#4ec9b0">EOS8-DEMO</i><i style="color:#d4d4d4">,</i><i style="color:#4ec9b0">EOS8-DEMO-PROVIDER01</i><i style="color:#d4d4d4">,</i><i style="color:#569cd6">default</i><i style="color:#d4d4d4">,node-</i><i style="color:#b5cea8">10-16-16-210</i><i style="color:#d4d4d4">:</i><i style="color:#4ec9b0">EOS8-DEMO-PROVIDER01</i><i style="color:#d4d4d4">:</i><i style="color:#b5cea8">38083</i><i style="color:#d4d4d4">,,,,] </i><i style="color:#b5cea8">4368</i><i style="color:#d4d4d4"> --- [main] trationDelegate$BeanPostProcessorChecker</i><i style="color:#4ec9b0"></i><i style="color:#d4d4d4"> : </i><i style="color:#4ec9b0">Beantstrapping Spring Data repositories in DEFAULT mode.</i></span></div>
<div class="ln" style="top:456px"><span class="num">25</span><span class="txt"><i style="color:#b5cea8">2020-04-07 11:22:44.062</i><i style="color:#d4d4d4">  </i><i style="color:#4ec9b0">INFO</i><i style="color:#d4d4d4"> [</i><i style="color:#4ec9b0">EOS8-DEMO</i><i style="color:#d4d4d4">,</i><i style="color:#4ec9b0">EOS8-DEMO-PROVIDER01</i><i style="color:#d4d4d4">,</i><i style="color:#569cd6">default</i><i style="color:#d4d4d4">,node-</i><i style="color:#b5cea8">10-16-16-210</i><i style="color:#d4d4d4">:</i><i style="color:#4ec9b0">EOS8-DEMO-PROVIDER01</i><i style="color:#d4d4d4">:</i><i style="color:#b5cea8">38083</i><i style="color:#d4d4d4">,,,,] </i><i style="color:#b5cea8">4368</i><i style="color:#d4d4d4"> --- [main] trationDelegate$BeanPostProcessorChecker</i><i style="color:#4ec9b0"></i><i style="color:#d4d4d4"> : </i><i style="color:#4ec9b0">Beantstrapping Spring Data repositories in DEFAULT mode.</i></span></div>
<div class="ln" style="top:475px"><span class="num">26</span><span class="txt"><i style="color:#b5cea8">2020-04-07 11:22:44.100</i><i style="color:#d4d4d4">  </i><i style="color:#4ec9b0">INFO</i><i style="color:#d4d4d4"> [</i><i style="color:#4ec9b0">EOS8-DEMO</i><i style="color:#d4d4d4">,</i><i style="color:#4ec9b0">EOS8-DEMO-PROVIDER01</i><i style="color:#d4d4d4">,</i><i style="color:#569cd6">default</i><i style="color:#d4d4d4">,node-</i><i style="color:#b5cea8">10-16-16-210</i><i style="color:#d4d4d4">:</i><i style="color:#4ec9b0">EOS8-DEMO-PROVIDER01</i><i style="color:#d4d4d4">:</i><i style="color:#b5cea8">38083</i><i style="color:#d4d4d4">,,,,] </i><i style="color:#b5cea8">4368</i><i style="color:#d4d4d4"> --- [main] trationDelegate$BeanPostProcessorChecker</i><i style="color:#4ec9b0"></i><i style="color:#d4d4d4"> : </i><i style="color:#4ec9b0">Beantstrapping Spring Data repositories in DEFAULT mode.</i></span></div>
<div class="ln" style="top:494px"><span class="num">27</span><span class="txt"><i style="color:#b5cea8">2020-04-07 11:22:44.112</i><i style="color:#d4d4d4">  </i><i style="color:#4ec9b0">INFO</i><i style="color:#d4d4d4"> [</i><i style="color:#4ec9b0">EOS8-DEMO</i><i style="color:#d4d4d4">,</i><i style="color:#4ec9b0">EOS8-DEMO-PROVIDER01</i><i style="color:#d4d4d4">,</i><i style="color:#569cd6">default</i><i style="color:#d4d4d4">,node-</i><i style="color:#b5cea8">10-16-16-210</i><i style="color:#d4d4d4">:</i><i style="color:#4ec9b0">EOS8-DEMO-PROVIDER01</i><i style="color:#d4d4d4">:</i><i style="color:#b5cea8">38083</i><i style="color:#d4d4d4">,,,,] </i><i style="color:#b5cea8">4368</i><i style="color:#d4d4d4"> --- [main] trationDelegate$BeanPostProcessorChecker</i><i style="color:#4ec9b0"></i><i style="color:#d4d4d4"> : </i><i style="color:#4ec9b0">Beantstrapping Spring Data repositories in DEFAULT mode.</i></span></div>
<div class="ln" style="top:513px"><span class="num">28</span><span class="txt"><i style="color:#b5cea8">2020-04-07 11:22:44.124</i><i style="color:#d4d4d4">  </i><i style="color:#4ec9b0">INFO</i><i style="color:#d4d4d4"> [</i><i style="color:#4ec9b0">EOS8-DEMO</i><i style="color:#d4d4d4">,</i><i style="color:#4ec9b0">EOS8-DEMO-PROVIDER01</i><i style="color:#d4d4d4">,</i><i style="color:#569cd6">default</i><i style="color:#d4d4d4">,node-</i><i style="color:#b5cea8">10-16-16-210</i><i style="color:#d4d4d4">:</i><i style="color:#4ec9b0">EOS8-DEMO-PROVIDER01</i><i style="color:#d4d4d4">:</i><i style="color:#b5cea8">38083</i><i style="color:#d4d4d4">,,,,] </i><i style="color:#b5cea8">4368</i><i style="color:#d4d4d4"> --- [main] trationDelegate$BeanPostProcessorChecker</i><i style="color:#4ec9b0"></i><i style="color:#d4d4d4"> : </i><i style="color:#4ec9b0">Beantstrapping Spring Data repositories in DEFAULT mode.</i></span></div>
<div class="ln" style="top:532px"><span class="num">29</span><span class="txt"><i style="color:#b5cea8">2020-04-07 11:22:44.127</i><i style="color:#d4d4d4">  </i><i style="color:#4ec9b0">INFO</i><i style="color:#d4d4d4"> [</i><i style="color:#4ec9b0">EOS8-DEMO</i><i style="color:#d4d4d4">,</i><i style="color:#4ec9b0">EOS8-DEMO-PROVIDER01</i><i style="color:#d4d4d4">,</i><i style="color:#569cd6">default</i><i style="color:#d4d4d4">,node-</i><i style="color:#b5cea8">10-16-16-210</i><i style="color:#d4d4d4">:</i><i style="color:#4ec9b0">EOS8-DEMO-PROVIDER01</i><i style="color:#d4d4d4">:</i><i style="color:#b5cea8">38083</i><i style="color:#d4d4d4">,,,,] </i><i style="color:#b5cea8">4368</i><i style="color:#d4d4d4"> --- [main] trationDelegate$BeanPostProcessorChecker</i><i style="color:#4ec9b0"></i><i style="color:#d4d4d4"> : </i><i style="color:#4ec9b0">Beantstrapping Spring Data repositories in DEFAULT mode.</i></span></div>
<div class="ln" style="top:551px"><span class="num">30</span><span class="txt"><i style="color:#b5cea8">2020-04-07 11:22:44.129</i><i style="color:#d4d4d4">  </i><i style="color:#4ec9b0">INFO</i><i style="color:#d4d4d4"> [</i><i style="color:#4ec9b0">EOS8-DEMO</i><i style="color:#d4d4d4">,</i><i style="color:#4ec9b0">EOS8-DEMO-PROVIDER01</i><i style="color:#d4d4d4">,</i><i style="color:#569cd6">default</i><i style="color:#d4d4d4">,node-</i><i style="color:#b5cea8">10-16-16-210</i><i style="color:#d4d4d4">:</i><i style="color:#4ec9b0">EOS8-DEMO-PROVIDER01</i><i style="color:#d4d4d4">:</i><i style="color:#b5cea8">38083</i><i style="color:#d4d4d4">,,,,] </i><i style="color:#b5cea8">4368</i><i style="color:#d4d4d4"> --- [main] trationDelegate$BeanPostProcessorChecker</i><i style="color:#4ec9b0"></i><i style="color:#d4d4d4"> : </i><i style="color:#4ec9b0">Beantstrapping Spring Data repositories in DEFAULT mode.</i></span></div>
<div class="ln" style="top:570px"><span class="num">31</span><span class="txt"><i style="color:#b5cea8">2020-04-07 11:22:44.129</i><i style="color:#d4d4d4">  </i><i style="color:#4ec9b0">INFO</i><i style="color:#d4d4d4"> [</i><i style="color:#4ec9b0">EOS8-DEMO</i><i style="color:#d4d4d4">,</i><i style="color:#4ec9b0">EOS8-DEMO-PROVIDER01</i><i style="color:#d4d4d4">,</i><i style="color:#569cd6">default</i><i style="color:#d4d4d4">,node-</i><i style="color:#b5cea8">10-16-16-210</i><i style="color:#d4d4d4">:</i><i style="color:#4ec9b0">EOS8-DEMO-PROVIDER01</i><i style="color:#d4d4d4">:</i><i style="color:#b5cea8">38083</i><i style="color:#d4d4d4">,,,,] </i><i style="color:#b5cea8">4368</i><i style="color:#d4d4d4"> --- [main] c.p.e.d.s.c.a.</i><i style="color:#4ec9b0">SDKCoreAutoConfiguration</i><i style="color:#d4d4d4">   : </i><i style="color:#4ec9b0">Creatstrapping Spring Data repositories in DEFAULT mode.</i></span></div>
<div class="ln" style="top:589px"><span class="num">32</span><span class="txt"><i style="color:#b5cea8">2020-04-07 11:22:44.141</i><i style="color:#d4d4d4">  </i><i style="color:#4ec9b0">INFO</i><i style="color:#d4d4d4"> [</i><i style="color:#4ec9b0">EOS8-DEMO</i><i style="color:#d4d4d4">,</i><i style="color:#4ec9b0">EOS8-DEMO-PROVIDER01</i><i style="color:#d4d4d4">,</i><i style="color:#569cd6">default</i><i style="color:#d4d4d4">,node-</i><i style="color:#b5cea8">10-16-16-210</i><i style="color:#d4d4d4">:</i><i style="color:#4ec9b0">EOS8-DEMO-PROVIDER01</i><i style="color:#d4d4d4">:</i><i style="color:#b5cea8">38083</i><i style="color:#d4d4d4">,,,,] </i><i style="color:#b5cea8">4368</i><i style="color:#d4d4d4"> --- [main] c.p.e.d.s.c.a.</i><i style="color:#4ec9b0">SDKCoreAutoConfiguration</i><i style="color:#d4d4d4">   : </i><i style="color:#4ec9b0">Creatstrapping Spring Data repositories in DEFAULT mode.</i></span></div>
<div class="ln" style="top:608px"><span class="num">33</span><span class="txt"><i style="color:#b5cea8">2020-04-07 11:22:44.144</i><i style="color:#d4d4d4">  </i><i style="color:#4ec9b0">INFO</i><i style="color:#d4d4d4"> [</i><i style="color:#4ec9b0">EOS8-DEMO</i><i style="color:#d4d4d4">,</i><i style="color:#4ec9b0">EOS8-DEMO-PROVIDER01</i><i style="color:#d4d4d4">,</i><i style="color:#569cd6">default</i><i style="color:#d4d4d4">,node-</i><i style="color:#b5cea8">10-16-16-210</i><i style="color:#d4d4d4">:</i><i style="color:#4ec9b0">EOS8-DEMO-PROVIDER01</i><i style="color:#d4d4d4">:</i><i style="color:#b5cea8">38083</i><i style="color:#d4d4d4">,,,,] </i><i style="color:#b5cea8">4368</i><i style="color:#d4d4d4"> --- [main] c.p.e.d.s.t.a.</i><i style="color:#4ec9b0">SDKTraceAutoConfiguration</i><i style="color:#d4d4d4">  : </i><i style="color:#4ec9b0">Creatstrapping Spring Data repositories in DEFAULT mode.</i></span></div>
</div>
<div class="abs" style="left:1775px;top:240px;width:120px;height:625px;background:#1e1e1e"></div>
<div id="mmtop" class="abs" style="background:linear-gradient(90deg,#717c68 0px 1px,#717c68 1px 2px,#717c68 2px 3px,#717c68 3px 4px,#3a3e36 4px 5px,#717c68 5px 6px,#717c68 6px 7px,#3a3e36 7px 8px,#717c68 8px 9px,#717c68 9px 10px,#1e1e1e 10px 11px,#717c68 11px 12px,#717c68 12px 13px,#3a3e36 13px 14px,#717c68 14px 15px,#717c68 15px 16px,#3a3e36 16px 17px,#717c68 17px 18px,#717c68 18px 19px,#3a3e36 19px 20px,#717c68 20px 21px,#717c68 21px 22px,#717c68 22px 23px,#1e1e1e 23px 24px,#1e1e1e 24px 25px,#2f8070 25px 26px,#2f8070 26px 27px,#2f8070 27px 28px,#2f8070 28px 29px,#1e1e1e 29px 30px,#646464 30px 31px,#2f8070 31px 32px,#2f8070 32px 33px,#2f8070 33px 34px,#2f8070 34px 35px,#243e39 35px 36px,#2f8070 36px 37px,#2f8070 37px 38px,#2f8070 38px 39px,#2f8070 39px 40px,#2f2f2f 40px 41px,#2f8070 41px 42px,#2f8070 42px 43px,#2f8070 43px 44px,#2f8070 44px 45px,#243e39 45px 46px,#2f8070 46px 47px,#2f8070 47px 48px,#2f8070 48px 49px,#2f8070 49px 50px,#243e39 50px 51px,#2f8070 51px 52px,#2f8070 52px 53px,#2f8070 53px 54px,#2f8070 54px 55px,#2f8070 55px 56px,#2f8070 56px 57px,#2f8070 57px 58px,#2f8070 58px 59px,#2f8070 59px 60px,#2f8070 60px 61px,#2f2f2f 61px 62px,#3f6992 62px 63px,#3f6992 63px 64px,#3f6992 64px 65px,#3f6992 65px 66px,#3f6992 66px 67px,#3f6992 67px 68px,#3f6992 68px 69px,#2f2f2f 69px 70px,#888888 70px 71px,#888888 71px 72px,#888888 72px 73px,#888888 73px 74px,#414141 74px 75px,#717c68 75px 76px,#717c68 76px 77px,#3a3e36 77px 78px,#717c68 78px 79px,#717c68 79px 80px,#3a3e36 80px 81px,#717c68 81px 82px,#717c68 82px 83px,#3a3e36 83px 84px,#717c68 84px 85px,#717c68 85px 86px,#717c68 86px 87px,#414141 87px 88px,#2f8070 88px 89px,#2f8070 89px 90px,#2f8070 90px 91px,#2f8070 91px 92px,#243e39 92px 93px,#2f8070 93px 94px,#2f8070 94px 95px,#2f8070 95px 96px,#2f8070 96px 97px,#243e39 97px 98px,#2f8070 98px 99px,#2f8070 99px 100px,#2f8070 100px 101px,#2f8070 101px 102px,#2f8070 102px 103px,#2f8070 103px 104px,#2f8070 104px 105px,#2f8070 105px 106px,#2f8070 106px 107px,#2f8070 107px 108px,#414141 108px 109px,#717c68 109px 110px,#717c68 110px 111px,#717c68 111px 112px,#717c68 112px 113px,#717c68 113px 114px,#2f2f2f 114px 115px,#2f2f2f 115px 116px,#2f2f2f 116px 117px,#2f2f2f 117px 118px,#646464 118px 119px,#1e1e1e 119px 120px)"></div>
<div id="mmbot" class="abs" style="background:linear-gradient(90deg,#415834 0px 1px,#415834 1px 2px,#415834 2px 3px,#415834 3px 4px,#2a3226 4px 5px,#415834 5px 6px,#415834 6px 7px,#2a3226 7px 8px,#415834 8px 9px,#415834 9px 10px,#1e1e1e 10px 11px,#415834 11px 12px,#415834 12px 13px,#2a3226 13px 14px,#415834 14px 15px,#415834 15px 16px,#2a3226 16px 17px,#415834 17px 18px,#415834 18px 19px,#2a3226 19px 20px,#415834 20px 21px,#415834 21px 22px,#415834 22px 23px,#1e1e1e 23px 24px,#1e1e1e 24px 25px,#3f5c34 25px 26px,#3f5c34 26px 27px,#3f5c34 27px 28px,#3f5c34 28px 29px,#1e1e1e 29px 30px,#38482f 30px 31px,#3f5c34 31px 32px,#3f5c34 32px 33px,#3f5c34 33px 34px,#3f5c34 34px 35px,#293326 35px 36px,#3f5c34 36px 37px,#3f5c34 37px 38px,#3f5c34 38px 39px,#3f5c34 39px 40px,#242822 40px 41px,#3f5c34 41px 42px,#3f5c34 42px 43px,#3f5c34 43px 44px,#3f5c34 44px 45px,#293326 45px 46px,#3f5c34 46px 47px,#3f5c34 47px 48px,#3f5c34 48px 49px,#3f5c34 49px 50px,#293326 50px 51px,#3f5c34 51px 52px,#3f5c34 52px 53px,#3f5c34 53px 54px,#3f5c34 54px 55px,#3f5c34 55px 56px,#3f5c34 56px 57px,#3f5c34 57px 58px,#3f5c34 58px 59px,#3f5c34 59px 60px,#3f5c34 60px 61px,#242822 61px 62px,#3e5834 62px 63px,#3e5834 63px 64px,#3e5834 64px 65px,#3e5834 65px 66px,#3e5834 66px 67px,#3e5834 67px 68px,#3e5834 68px 69px,#242822 69px 70px,#455c38 70px 71px,#455c38 71px 72px,#455c38 72px 73px,#455c38 73px 74px,#2b3326 74px 75px,#415834 75px 76px,#415834 76px 77px,#2a3226 77px 78px,#415834 78px 79px,#415834 79px 80px,#2a3226 80px 81px,#415834 81px 82px,#415834 82px 83px,#2a3226 83px 84px,#415834 84px 85px,#415834 85px 86px,#415834 86px 87px,#2b3326 87px 88px,#3f5c34 88px 89px,#3f5c34 89px 90px,#3f5c34 90px 91px,#3f5c34 91px 92px,#293326 92px 93px,#3f5c34 93px 94px,#3f5c34 94px 95px,#3f5c34 95px 96px,#3f5c34 96px 97px,#293326 97px 98px,#3f5c34 98px 99px,#3f5c34 99px 100px,#3f5c34 100px 101px,#3f5c34 101px 102px,#3f5c34 102px 103px,#3f5c34 103px 104px,#3f5c34 104px 105px,#3f5c34 105px 106px,#3f5c34 106px 107px,#3f5c34 107px 108px,#2b3326 108px 109px,#415834 109px 110px,#415834 110px 111px,#415834 111px 112px,#415834 112px 113px,#415834 113px 114px,#242822 114px 115px,#242822 115px 116px,#242822 116px 117px,#242822 117px 118px,#38482f 118px 119px,#1e1e1e 119px 120px)"></div>
<div class="abs" style="left:1775px;top:240px;width:120px;height:608px;background:repeating-linear-gradient(180deg,rgba(30,30,30,0.18) 0 1px,rgba(0,0,0,0) 1px 2px)"></div>
<div class="abs" style="left:1775px;top:468px;width:114px;height:2px;background:repeating-linear-gradient(90deg,#2a3325 0 3px,#55703f 3px 4px)"></div>
<div class="abs" style="left:1775px;top:642px;width:114px;height:2px;background:repeating-linear-gradient(90deg,#2a3325 0 3px,#55703f 3px 4px)"></div>
<div class="abs" style="left:1775px;top:812px;width:114px;height:2px;background:repeating-linear-gradient(90deg,#2a3325 0 3px,#55703f 3px 4px)"></div>
<div id="vs" class="abs"></div>
<div id="vsl" class="abs"></div>
<div class="abs" style="left:1896px;top:240px;width:13px;height:2px;background:#6a6a6a"></div>
<div id="hs" class="abs"></div>

<div id="more" class="abs"><svg style="position:absolute;left:112px;top:13px" width="13" height="4" viewBox="0 0 13 4"><circle cx="2" cy="2" r="1.8" fill="#fff"/><circle cx="6.5" cy="2" r="1.8" fill="#fff"/><circle cx="11" cy="2" r="1.8" fill="#fff"/></svg><span style="position:absolute;left:130px;top:1px">加载更多</span></div>

</body></html>
